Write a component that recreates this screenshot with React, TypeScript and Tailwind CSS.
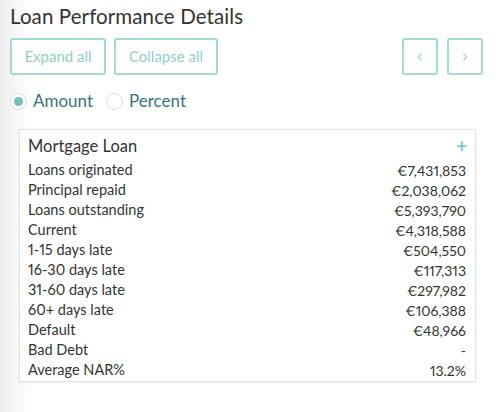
import React from "react";

const rows: [string, string][] = [
  ["Loans originated", "€7,431,853"],
  ["Principal repaid", "€2,038,062"],
  ["Loans outstanding", "€5,393,790"],
  ["Current", "€4,318,588"],
  ["1-15 days late", "€504,550"],
  ["16-30 days late", "€117,313"],
  ["31-60 days late", "€297,982"],
  ["60+ days late", "€106,388"],
  ["Default", "€48,966"],
  ["Bad Debt", "-"],
  ["Average NAR%", "13.2%"],
];

export default function App() {
  return (
    <div
      className="w-[496px] h-[412px] overflow-hidden bg-[linear-gradient(to_right,#ececec,#f8f8f8_18px,#ffffff_34px)] pl-[10px] text-[#333]"
      style={{ fontFamily: "Lato, 'Open Sans', sans-serif" }}
    >
      <h1 className="text-[20.5px] leading-[28px] pt-[2px] text-[#333] tracking-[0.1px]">Loan Performance Details</h1>
      <div className="flex items-center mt-[8px] pr-[13px]">
        <button className="w-[96px] h-[37px] border-2 border-[#a3dad3] rounded-[3px] text-[#8fcfc6] text-[15px] bg-white">
          Expand all
        </button>
        <button className="ml-[8px] w-[104px] h-[37px] border-2 border-[#a3dad3] rounded-[3px] text-[#8fcfc6] text-[15px] bg-white">
          Collapse all
        </button>
        <div className="flex-1" />
        <button className="w-[36px] h-[37px] border-2 border-[#a3dad3] rounded-[3px] flex items-center justify-center bg-white">
          <svg width="8" height="10" viewBox="0 0 8 10" fill="none" stroke="#a6d8d2" strokeWidth="1.3">
            <path d="M5.5 1.5 L2.5 5 L5.5 8.5" />
          </svg>
        </button>
        <button className="ml-[9px] w-[36px] h-[37px] border-2 border-[#a3dad3] rounded-[3px] flex items-center justify-center bg-white">
          <svg width="8" height="10" viewBox="0 0 8 10" fill="none" stroke="#a6d8d2" strokeWidth="1.3">
            <path d="M2.5 1.5 L5.5 5 L2.5 8.5" />
          </svg>
        </button>
      </div>
      <div className="flex items-center mt-[17px] h-[18px]">
        <span className="w-[17px] h-[17px] rounded-full border border-[#dcdcdc] bg-white flex items-center justify-center">
          <span className="w-[9px] h-[9px] rounded-full bg-[#6fc2b7]" />
        </span>
        <span className="ml-[6px] text-[17px] text-[#3c7479]">Amount</span>
        <span className="ml-[13px] w-[17px] h-[17px] rounded-full border border-[#dcdcdc] bg-white" />
        <span className="ml-[6px] text-[17px] text-[#3c7479]">Percent</span>
      </div>
      <div className="mt-[19px] ml-[9px] w-[457px] border border-[#e2e2e2] bg-white shadow-[0_1px_2px_rgba(0,0,0,0.06)] pl-[8px] pr-[9px] pb-[1px]">
        <div className="flex items-center justify-between h-[28px] mt-[2px]">
          <span className="text-[16.5px] text-[#333]">Mortgage Loan</span>
          <span className="text-[#7ccbc1] text-[18px] font-bold leading-none mr-[-1px]">+</span>
        </div>
        {rows.map(([k, v]) => (
          <div key={k} className="flex justify-between h-[20px] items-center text-[14.5px] text-[#333] proportional-nums">
            <span>{k}</span>
            <span className="text-[14px]">{v}</span>
          </div>
        ))}
      </div>
    </div>
  );
}
